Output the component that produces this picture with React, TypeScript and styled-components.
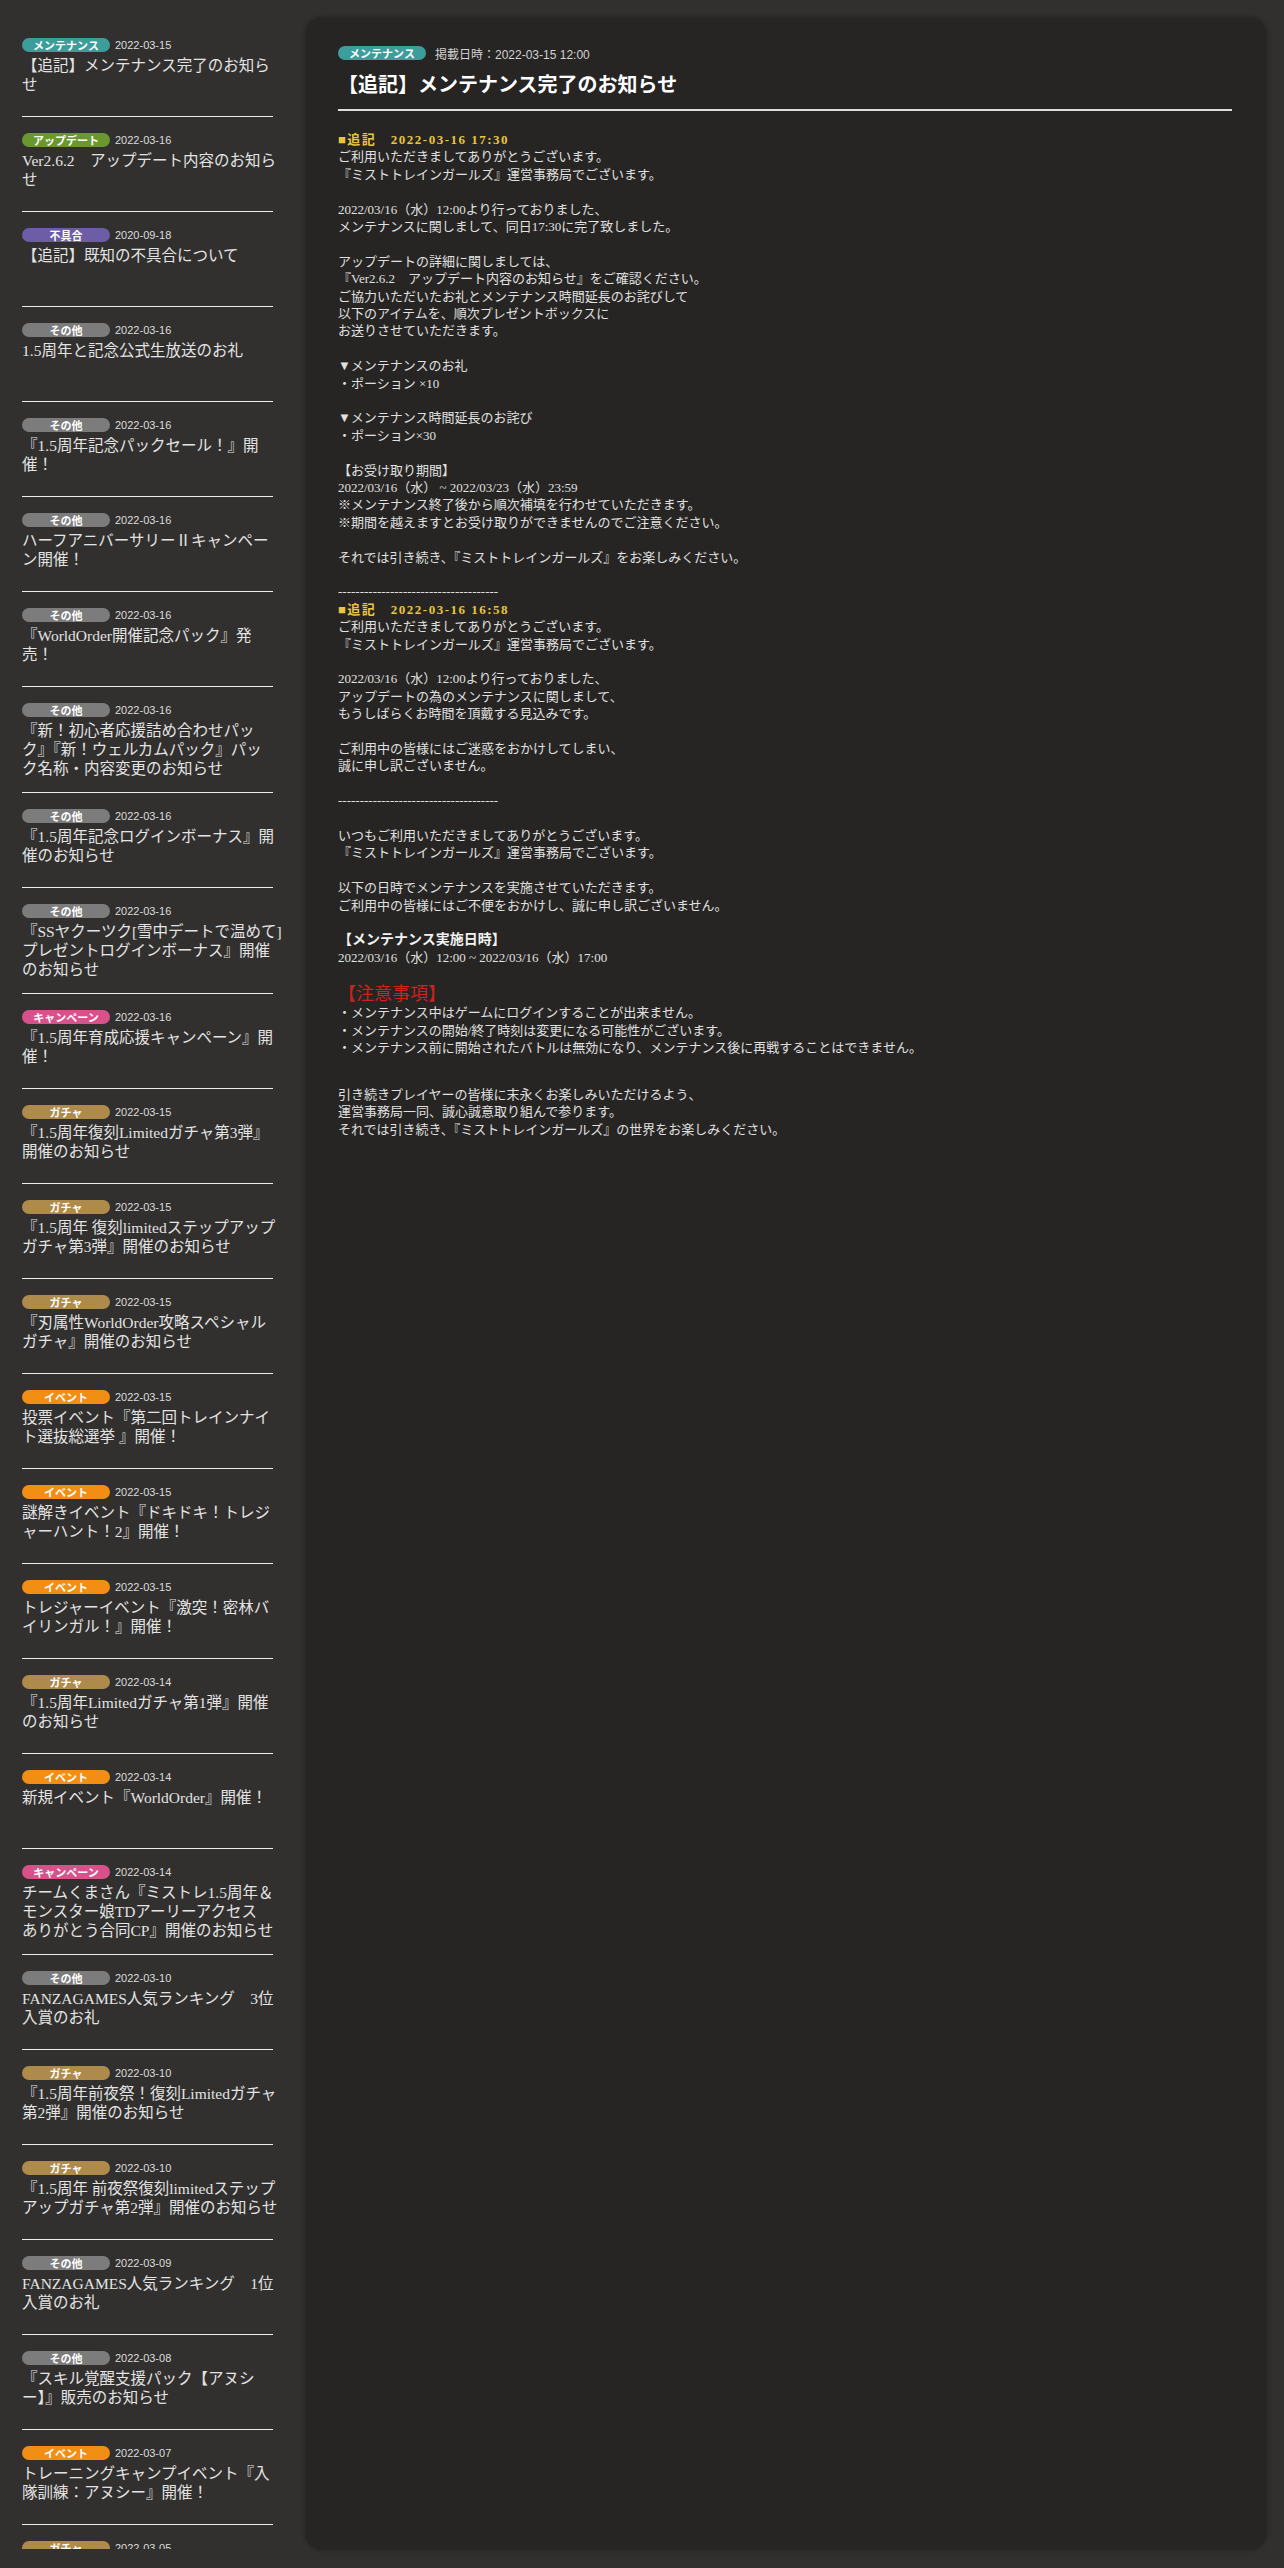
import React from "react";
import styled, { createGlobalStyle } from "styled-components";

const GlobalStyle = createGlobalStyle`
  html, body {
    margin: 0;
    padding: 0;
    background: #31302e;
  }
  body {
    font-family: "Liberation Serif", "Noto Sans CJK JP", serif;
    -webkit-font-smoothing: antialiased;
  }
`;

const BADGE_COLORS: Record<string, string> = {
  メンテナンス: "#3c9d9a",
  アップデート: "#6a982e",
  不具合: "#6c5da6",
  その他: "#7c7c7c",
  キャンペーン: "#d9518b",
  ガチャ: "#ae8a4b",
  イベント: "#f28e14",
};

type News = { cat: string; date: string; lines: string[] };

const NEWS: News[] = [
  { cat: "メンテナンス", date: "2022-03-15", lines: ["【追記】メンテナンス完了のお知ら", "せ"] },
  { cat: "アップデート", date: "2022-03-16", lines: ["Ver2.6.2　アップデート内容のお知ら", "せ"] },
  { cat: "不具合", date: "2020-09-18", lines: ["【追記】既知の不具合について"] },
  { cat: "その他", date: "2022-03-16", lines: ["1.5周年と記念公式生放送のお礼"] },
  { cat: "その他", date: "2022-03-16", lines: ["『1.5周年記念パックセール！』開", "催！"] },
  { cat: "その他", date: "2022-03-16", lines: ["ハーフアニバーサリーⅡキャンペー", "ン開催！"] },
  { cat: "その他", date: "2022-03-16", lines: ["『WorldOrder開催記念パック』発", "売！"] },
  {
    cat: "その他",
    date: "2022-03-16",
    lines: ["『新！初心者応援詰め合わせパッ", "ク』『新！ウェルカムパック』パッ", "ク名称・内容変更のお知らせ"],
  },
  { cat: "その他", date: "2022-03-16", lines: ["『1.5周年記念ログインボーナス』開", "催のお知らせ"] },
  {
    cat: "その他",
    date: "2022-03-16",
    lines: ["『SSヤクーツク[雪中デートで温めて]", "プレゼントログインボーナス』開催", "のお知らせ"],
  },
  { cat: "キャンペーン", date: "2022-03-16", lines: ["『1.5周年育成応援キャンペーン』開", "催！"] },
  { cat: "ガチャ", date: "2022-03-15", lines: ["『1.5周年復刻Limitedガチャ第3弾』", "開催のお知らせ"] },
  { cat: "ガチャ", date: "2022-03-15", lines: ["『1.5周年 復刻limitedステップアップ", "ガチャ第3弾』開催のお知らせ"] },
  { cat: "ガチャ", date: "2022-03-15", lines: ["『刃属性WorldOrder攻略スペシャル", "ガチャ』開催のお知らせ"] },
  { cat: "イベント", date: "2022-03-15", lines: ["投票イベント『第二回トレインナイ", "ト選抜総選挙 』開催！"] },
  { cat: "イベント", date: "2022-03-15", lines: ["謎解きイベント『ドキドキ！トレジ", "ャーハント！2』開催！"] },
  { cat: "イベント", date: "2022-03-15", lines: ["トレジャーイベント『激突！密林バ", "イリンガル！』開催！"] },
  { cat: "ガチャ", date: "2022-03-14", lines: ["『1.5周年Limitedガチャ第1弾』開催", "のお知らせ"] },
  { cat: "イベント", date: "2022-03-14", lines: ["新規イベント『WorldOrder』開催！"] },
  {
    cat: "キャンペーン",
    date: "2022-03-14",
    lines: ["チームくまさん『ミストレ1.5周年＆", "モンスター娘TDアーリーアクセス", "ありがとう合同CP』開催のお知らせ"],
  },
  { cat: "その他", date: "2022-03-10", lines: ["FANZAGAMES人気ランキング　3位", "入賞のお礼"] },
  { cat: "ガチャ", date: "2022-03-10", lines: ["『1.5周年前夜祭！復刻Limitedガチャ", "第2弾』開催のお知らせ"] },
  { cat: "ガチャ", date: "2022-03-10", lines: ["『1.5周年 前夜祭復刻limitedステップ", "アップガチャ第2弾』開催のお知らせ"] },
  { cat: "その他", date: "2022-03-09", lines: ["FANZAGAMES人気ランキング　1位", "入賞のお礼"] },
  { cat: "その他", date: "2022-03-08", lines: ["『スキル覚醒支援パック【アヌシ", "ー】』販売のお知らせ"] },
  { cat: "イベント", date: "2022-03-07", lines: ["トレーニングキャンプイベント『入", "隊訓練：アヌシー』開催！"] },
  { cat: "ガチャ", date: "2022-03-05", lines: ["『1.5周年前夜祭！復刻Limitedガチャ", "第1弾』開催のお知らせ"] },
];

const Page = styled.div`
  display: flex;
  align-items: flex-start;
  gap: 18px;
  padding: 18px;
  height: 2568px;
  box-sizing: border-box;
`;

const Sidebar = styled.nav`
  flex: none;
  width: 270px;
  height: 2531px;
  padding: 4px 0 0 4px;
  box-sizing: border-box;
  overflow: hidden;
`;

const NewsItem = styled.a`
  display: block;
  width: 251px;
  padding: 16px 0 14px;
  border-bottom: 1px solid #ededed;
  color: #e3e3e3;
  text-decoration: none;
  cursor: pointer;
`;

const BadgeRow = styled.div`
  display: flex;
  align-items: center;
  gap: 5px;
  height: 14px;
  margin-bottom: 4px;
`;

const Badge = styled.span<{ $color: string }>`
  display: inline-flex;
  align-items: center;
  justify-content: center;
  flex: none;
  width: 88px;
  height: 14px;
  border-radius: 7px;
  background: ${(p) => p.$color};
  color: #fff;
  font-family: "Noto Sans CJK JP", sans-serif;
  font-weight: 700;
  font-size: 11px;
  line-height: 14px;
`;

const DateText = styled.span`
  font-family: "Liberation Sans", "Noto Sans CJK JP", sans-serif;
  font-size: 11px;
  color: #dcdcdc;
  line-height: 14px;
`;

const ItemTitle = styled.div`
  min-height: 46px;
  font-size: 15.5px;
  line-height: 19px;
  white-space: nowrap;
`;

const Panel = styled.main`
  flex: 1;
  height: 2531px;
  background: #262523;
  border-radius: 16px;
  box-shadow: 0 0 5px rgba(0, 0, 0, 0.45);
  padding: 28px 34px 0 32px;
  box-sizing: border-box;
  color: #e0e0e0;
`;

const MetaRow = styled.div`
  display: flex;
  align-items: center;
  gap: 9px;
  height: 14px;
`;

const MetaText = styled.span`
  font-family: "Liberation Sans", "Noto Sans CJK JP", sans-serif;
  font-size: 12px;
  color: #d2d2d2;
`;

const Title = styled.h1`
  margin: 9px 0 0;
  font-family: "Noto Sans CJK JP", sans-serif;
  font-size: 20px;
  font-weight: 700;
  line-height: 30px;
  color: #fff;
`;

const Rule = styled.hr`
  margin: 10px 0 0;
  border: none;
  height: 2px;
  background: #dcdcdc;
`;

const Body = styled.div`
  padding-top: 20px;
  font-size: 13px;
  line-height: 17.4px;
`;

const Addendum = styled.div`
  color: #e9c63f;
  font-weight: 700;
  letter-spacing: 1.5px;
`;

const Para = styled.p<{ $gap?: number }>`
  margin: 0 0 ${(p) => (p.$gap ?? 17.4)}px;
`;

const Strong = styled.div`
  font-weight: 700;
  font-size: 14px;
  color: #f2f2f2;
`;

const Notice = styled.div`
  color: #d21f1f;
  font-size: 18px;
  line-height: 20.4px;
`;

const Bullets = styled.ul`
  list-style: none;
  margin: 0 0 29.4px;
  padding: 0;
`;

const Dashes = "-------------------------------------";

const Lines: React.FC<{ items: string[] }> = ({ items }) => (
  <>
    {items.map((t, i) => (
      <React.Fragment key={i}>
        {i > 0 && <br />}
        {t}
      </React.Fragment>
    ))}
  </>
);

export default function App() {
  return (
    <>
      <GlobalStyle />
      <Page>
        <Sidebar>
          {NEWS.map((n, i) => (
            <NewsItem key={i}>
              <BadgeRow>
                <Badge $color={BADGE_COLORS[n.cat]}>{n.cat}</Badge>
                <DateText>{n.date}</DateText>
              </BadgeRow>
              <ItemTitle>
                <Lines items={n.lines} />
              </ItemTitle>
            </NewsItem>
          ))}
        </Sidebar>
        <Panel>
          <MetaRow>
            <Badge $color={BADGE_COLORS["メンテナンス"]}>メンテナンス</Badge>
            <MetaText>掲載日時：2022-03-15 12:00</MetaText>
          </MetaRow>
          <Title>【追記】メンテナンス完了のお知らせ</Title>
          <Rule />
          <Body>
            <Addendum>■追記　2022-03-16 17:30</Addendum>
            <Para>
              <Lines items={["ご利用いただきましてありがとうございます。", "『ミストトレインガールズ』運営事務局でございます。"]} />
            </Para>
            <Para>
              <Lines items={["2022/03/16（水）12:00より行っておりました、", "メンテナンスに関しまして、同日17:30に完了致しました。"]} />
            </Para>
            <Para>
              <Lines
                items={[
                  "アップデートの詳細に関しましては、",
                  "『Ver2.6.2　アップデート内容のお知らせ』をご確認ください。",
                  "ご協力いただいたお礼とメンテナンス時間延長のお詫びして",
                  "以下のアイテムを、順次プレゼントボックスに",
                  "お送りさせていただきます。",
                ]}
              />
            </Para>
            <Para>
              <Lines items={["▼メンテナンスのお礼", "・ポーション ×10"]} />
            </Para>
            <Para>
              <Lines items={["▼メンテナンス時間延長のお詫び", "・ポーション×30"]} />
            </Para>
            <Para>
              <Lines
                items={[
                  "【お受け取り期間】",
                  "2022/03/16（水） ~ 2022/03/23（水）23:59",
                  "※メンテナンス終了後から順次補填を行わせていただきます。",
                  "※期間を越えますとお受け取りができませんのでご注意ください。",
                ]}
              />
            </Para>
            <Para>それでは引き続き、『ミストトレインガールズ』をお楽しみください。</Para>
            <Para $gap={0}>{Dashes}</Para>
            <Addendum>■追記　2022-03-16 16:58</Addendum>
            <Para>
              <Lines items={["ご利用いただきましてありがとうございます。", "『ミストトレインガールズ』運営事務局でございます。"]} />
            </Para>
            <Para>
              <Lines
                items={[
                  "2022/03/16（水）12:00より行っておりました、",
                  "アップデートの為のメンテナンスに関しまして、",
                  "もうしばらくお時間を頂戴する見込みです。",
                ]}
              />
            </Para>
            <Para>
              <Lines items={["ご利用中の皆様にはご迷惑をおかけしてしまい、", "誠に申し訳ございません。"]} />
            </Para>
            <Para>{Dashes}</Para>
            <Para>
              <Lines items={["いつもご利用いただきましてありがとうございます。", "『ミストトレインガールズ』運営事務局でございます。"]} />
            </Para>
            <Para>
              <Lines
                items={[
                  "以下の日時でメンテナンスを実施させていただきます。",
                  "ご利用中の皆様にはご不便をおかけし、誠に申し訳ございません。",
                ]}
              />
            </Para>
            <Para>
              <Strong>【メンテナンス実施日時】</Strong>
              2022/03/16（水）12:00 ~ 2022/03/16（水）17:00
            </Para>
            <Notice>【注意事項】</Notice>
            <Bullets>
              <li>・メンテナンス中はゲームにログインすることが出来ません。</li>
              <li>・メンテナンスの開始/終了時刻は変更になる可能性がございます。</li>
              <li>・メンテナンス前に開始されたバトルは無効になり、メンテナンス後に再戦することはできません。</li>
            </Bullets>
            <Para>
              <Lines
                items={[
                  "引き続きプレイヤーの皆様に末永くお楽しみいただけるよう、",
                  "運営事務局一同、誠心誠意取り組んで参ります。",
                  "それでは引き続き、『ミストトレインガールズ』の世界をお楽しみください。",
                ]}
              />
            </Para>
          </Body>
        </Panel>
      </Page>
    </>
  );
}
